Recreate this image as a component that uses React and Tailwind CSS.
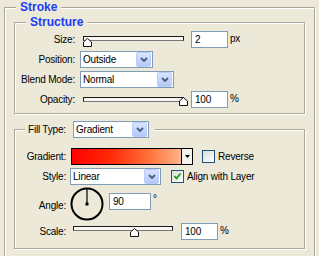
function Chevron() {
  return (
    <svg width="8" height="5" viewBox="0 0 8 5">
      <path d="M1 1 L4 4 L7 1" fill="none" stroke="#4d6185" strokeWidth="2" />
    </svg>
  )
}

function Select({ value, width }) {
  return (
    <div className={`flex h-[17px] shrink-0 items-center border border-[#7f9db9] bg-white ${width}`}>
      <span className="flex-1 pl-[2px] leading-none">{value}</span>
      <span className="mr-px flex h-[15px] w-[15px] items-center justify-center rounded-[2px] border border-[#b9cdf8] bg-gradient-to-b from-[#d9e4fd] to-[#b4c8f8]">
        <Chevron />
      </span>
    </div>
  )
}

function TextBox({ value, width, className = "" }) {
  return (
    <div className={`flex h-[17px] shrink-0 items-center border border-[#7f9db9] bg-white pl-[3px] leading-none ${width} ${className}`}>
      {value}
    </div>
  )
}

function Thumb() {
  return (
    <svg width="9" height="9" viewBox="0 0 9 9">
      <path d="M0.5 8.5 V4 L4.5 0.5 L8.5 4 V8.5 Z" fill="#fff" stroke="#111" strokeWidth="1" />
    </svg>
  )
}

function Slider({ width, thumb, trackTop = "top-[5px]", thumbTop = "top-[7px]" }) {
  return (
    <div className={`relative h-[17px] shrink-0 ${width}`}>
      <div className={`absolute left-0 right-0 ${trackTop} h-[5px] border border-[#1b1b1b] border-b-[#777] bg-[#f7f6f1]`} />
      <div className={`absolute ${thumbTop}`} style={{ left: thumb }}>
        <Thumb />
      </div>
    </div>
  )
}

function Checkbox({ checked }) {
  return (
    <span className="flex h-[13px] w-[13px] shrink-0 items-center justify-center border border-[#1c5180] bg-gradient-to-br from-[#dcdcd7] to-white">
      {checked && (
        <svg width="9" height="9" viewBox="0 0 9 9">
          <path d="M1.5 4 L3.5 6.5 L7.5 1.5" fill="none" stroke="#21a121" strokeWidth="2" />
        </svg>
      )}
    </span>
  )
}

function StructRow({ label, children }) {
  return (
    <div className="flex h-[17px] items-center">
      <span className="w-[60px] shrink-0 text-right">{label}</span>
      <div className="ml-[5px] flex items-center">{children}</div>
    </div>
  )
}

export default function App() {
  return (
    <div className="h-[256px] w-[319px] overflow-hidden bg-[#ece9d8] font-['Liberation_Sans',Arial,sans-serif] text-[10px] tracking-[-0.2px] text-black">
      <fieldset className="ml-[4px] h-[290px] w-[311px] border border-[#aca899] shadow-[inset_1px_1px_0_#fff,1px_1px_0_#fff]">
        <legend className="ml-[11px] bg-[#ece9d8] px-[4px] text-[12px] font-bold leading-[14px] tracking-normal text-[#1c3cf6]">
          Stroke
        </legend>

        <fieldset className="ml-[9px] mt-px h-[99px] w-[291px] border border-[#aca899] shadow-[inset_1px_1px_0_#fff,1px_1px_0_#fff]">
          <legend className="ml-[11px] bg-[#ece9d8] px-[4px] text-[12px] font-bold leading-[14px] tracking-normal text-[#1c3cf6]">
            Structure
          </legend>
          <div className="mt-[2px] flex flex-col gap-[3px]">
            <StructRow label="Size:">
              <div className="pl-[3px]">
                <Slider width="w-[101px]" thumb={0} />
              </div>
              <TextBox value="2" width="w-[37px]" className="ml-[7px]" />
              <span className="ml-[2px] self-start">px</span>
            </StructRow>
            <StructRow label="Position:">
              <Select value="Outside" width="w-[73px]" />
            </StructRow>
            <StructRow label="Blend Mode:">
              <Select value="Normal" width="w-[94px]" />
            </StructRow>
            <StructRow label="Opacity:">
              <div className="pl-[3px]">
                <Slider width="w-[101px]" thumb={96} trackTop="top-[6px]" thumbTop="top-[6px]" />
              </div>
              <TextBox value="100" width="w-[37px]" className="ml-[7px]" />
              <span className="ml-[2px] self-start">%</span>
            </StructRow>
          </div>
        </fieldset>

        <fieldset className="ml-[9px] mt-[7px] h-[128px] w-[291px] border border-[#aca899] shadow-[inset_1px_1px_0_#fff,1px_1px_0_#fff]">
          <legend className="ml-[10px] flex items-center bg-[#ece9d8] pl-[3px] pr-[6px]">
            <span className="w-[45px]">Fill Type:</span>
            <Select value="Gradient" width="w-[76px]" />
          </legend>

          <div className="mt-[10px] flex h-[17px] items-center">
            <span className="w-[51px] shrink-0 text-right">Gradient:</span>
            <div className="ml-[5px] flex h-[17px] w-[122px] border border-black">
              <div className="flex-1 bg-[linear-gradient(to_right,#ff0000,#ff2a08_35%,#ff7038_70%,#ffb48a)]" />
              <div className="flex w-[11px] items-center justify-center border-l border-black bg-[#f4f3ee]">
                <svg width="5" height="3" viewBox="0 0 5 3">
                  <path d="M0 0 H5 L2.5 3 Z" fill="#000" />
                </svg>
              </div>
            </div>
            <span className="ml-[9px]">
              <Checkbox />
            </span>
            <span className="ml-[3px]">Reverse</span>
          </div>

          <div className="mt-[3px] flex h-[17px] items-center">
            <span className="w-[51px] shrink-0 text-right">Style:</span>
            <div className="ml-[4px]">
              <Select value="Linear" width="w-[91px]" />
            </div>
            <span className="ml-[10px]">
              <Checkbox checked />
            </span>
            <span className="ml-[3px]">Align with Layer</span>
          </div>

          <div className="mt-[2px] flex items-start">
            <span className="mt-[11px] w-[51px] shrink-0 text-right">Angle:</span>
            <svg className="ml-[4px]" width="34" height="34" viewBox="0 0 34 34">
              <circle cx="17" cy="17" r="15.5" fill="none" stroke="#000" strokeWidth="2" />
              <line x1="17" y1="2" x2="17" y2="17" stroke="#000" strokeWidth="1.2" />
              <rect x="15.5" y="15.5" width="3" height="3" fill="#000" />
            </svg>
            <TextBox value="90" width="w-[42px]" className="ml-[5px] mt-[6px]" />
            <span className="ml-[2px] mt-[4px]">°</span>
          </div>

          <div className="mt-[2px] flex h-[17px] items-center">
            <span className="w-[51px] shrink-0 text-right">Scale:</span>
            <div className="ml-[4px] pl-[3px]">
              <Slider width="w-[100px]" thumb={57} trackTop="top-[3px]" thumbTop="top-[5px]" />
            </div>
            <TextBox value="100" width="w-[37px]" className="ml-[8px]" />
            <span className="ml-[2px] self-start">%</span>
          </div>
        </fieldset>
      </fieldset>
    </div>
  )
}
